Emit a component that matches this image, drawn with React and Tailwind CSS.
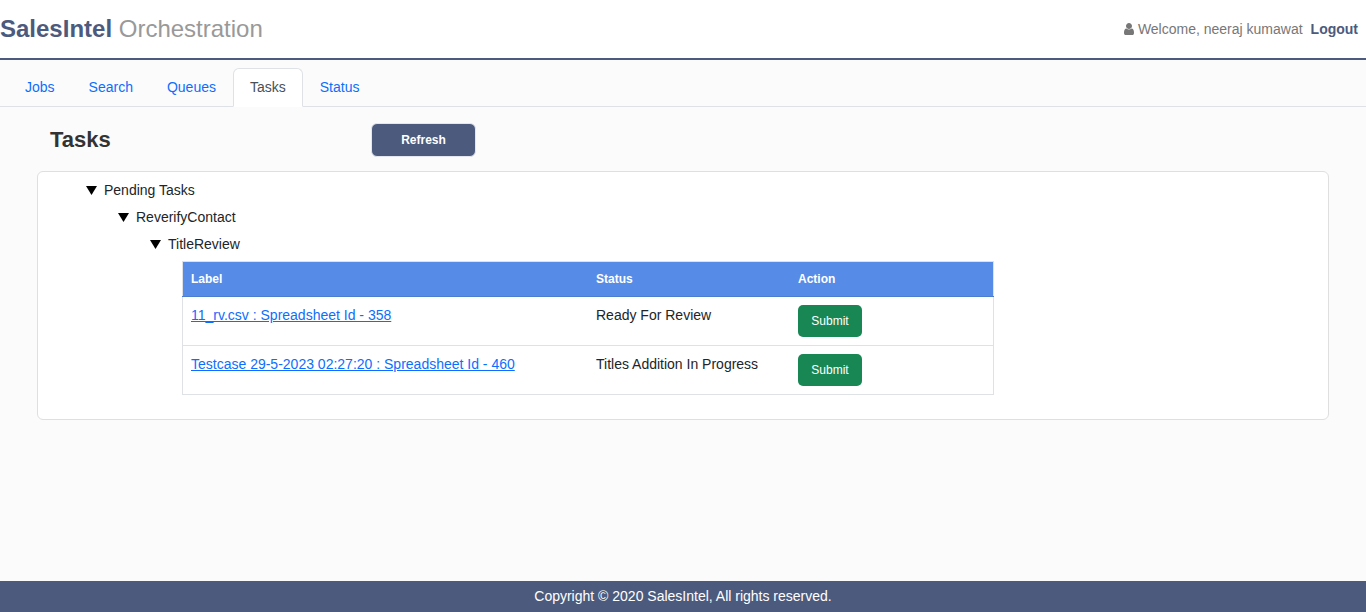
import { useState } from "react";

const tabs = ["Jobs", "Search", "Queues", "Tasks", "Status"];

const tasks = [
  { label: "11_rv.csv : Spreadsheet Id - 358", status: "Ready For Review" },
  { label: "Testcase 29-5-2023 02:27:20 : Spreadsheet Id - 460", status: "Titles Addition In Progress" },
];

function UserIcon() {
  return (
    <svg viewBox="0 0 1280 1792" className="h-[14px] w-[10px] fill-current" aria-hidden="true">
      <path d="M1280 1399q0 109-62.500 187t-150.500 78h-854q-88 0-150.500-78t-62.500-187q0-85 8.500-160.500t31.500-152 58.500-131 94-89 134.500-34.500q131 128 313 128t313-128q76 0 134.500 34.500t94 89 58.500 131 31.500 152 8.500 160.500zm-256-887q0 159-112.500 271.500t-271.500 112.500-271.500-112.500-112.500-271.500 112.500-271.500 271.500-112.500 271.500 112.500 112.500 271.500z" />
    </svg>
  );
}

function TreeNode({ label, children }) {
  const [open, setOpen] = useState(true);
  return (
    <li className="flex flex-col gap-1.5">
      <button
        type="button"
        aria-expanded={open}
        onClick={() => setOpen(!open)}
        className="flex items-center gap-1.5 self-start"
      >
        <svg viewBox="0 0 12 10" className={open ? "h-2.5 w-3 fill-black" : "h-2.5 w-3 -rotate-90 fill-black"} aria-hidden="true">
          <path d="M0 0h11L5.500 9z" />
        </svg>
        {label}
      </button>
      {open && children}
    </li>
  );
}

function TaskTable() {
  return (
    <table className="ml-8 w-full max-w-[812px] table-fixed border-collapse border border-[#dee2e6] text-left">
      <thead className="bg-[#568be7] text-xs leading-[18px] text-white">
        <tr className="border-b border-[#4d7dd0]">
          <th className="w-1/2 p-2 font-bold">Label</th>
          <th className="w-[202px] p-2 font-bold">Status</th>
          <th className="p-2 font-bold">Action</th>
        </tr>
      </thead>
      <tbody>
        {tasks.map((task) => (
          <tr key={task.label} className="border-b border-[#dee2e6] align-top">
            <td className="p-2">
              <a href="#sheet" className="text-[#0d6efd] underline">{task.label}</a>
            </td>
            <td className="p-2">{task.status}</td>
            <td className="p-2">
              <button type="button" className="block h-8 w-16 rounded-[5px] bg-[#198754] text-xs text-white">
                Submit
              </button>
            </td>
          </tr>
        ))}
      </tbody>
    </table>
  );
}

export default function App() {
  return (
    <div className="flex min-h-screen flex-col bg-[#fbfbfb] font-['Liberation_Sans',Arial,sans-serif] text-sm leading-[21px] text-[#212529]">
      <header className="flex items-center justify-between border-b-2 border-[#4c5a7d] bg-white pt-[11px] pr-2 pb-[11px]">
        <h1 className="text-2xl leading-9 text-[#999]">
          <span className="font-bold text-[#4c5a7d]">SalesIntel</span> Orchestration
        </h1>
        <div className="flex items-center gap-2 text-[#777]">
          <span className="flex items-center gap-1">
            <UserIcon />
            Welcome, neeraj kumawat
          </span>
          <a href="#logout" className="font-bold text-[#4c5a7d]">Logout</a>
        </div>
      </header>

      <nav className="flex border-b border-[#dee2e6] px-2 pt-2">
        {tabs.map((tab) => (
          <a
            key={tab}
            href={"#" + tab.toLowerCase()}
            aria-current={tab === "Tasks" ? "page" : undefined}
            className={
              tab === "Tasks"
                ? "-mb-px rounded-t-md border border-[#dee2e6] border-b-white bg-white px-4 py-2 text-[#495057]"
                : "-mb-px border border-transparent px-4 py-2 text-[#0d6efd]"
            }
          >
            {tab}
          </a>
        ))}
      </nav>

      <main className="grow px-[37px] pt-4 pb-8">
        <div className="mb-3.5 flex items-center pl-[13px]">
          <h2 className="w-[321px] text-[22px] leading-8 font-bold text-[#333]">Tasks</h2>
          <button
            type="button"
            className="h-[34px] w-[105px] rounded-md border border-[#e3e6ee] bg-[#4c5a7d] text-xs font-bold text-white"
          >
            Refresh
          </button>
        </div>

        <section className="rounded-md border border-[#dfdfdf] bg-white px-12 pt-2 pb-6">
          <ul>
            <TreeNode label="Pending Tasks">
              <ul className="pl-8">
                <TreeNode label="ReverifyContact">
                  <ul className="pl-8">
                    <TreeNode label="TitleReview">
                      <TaskTable />
                    </TreeNode>
                  </ul>
                </TreeNode>
              </ul>
            </TreeNode>
          </ul>
        </section>
      </main>

      <footer className="bg-[#4c5a7d] py-[5px] text-center text-white">
        Copyright © 2020 SalesIntel, All rights reserved.
      </footer>
    </div>
  );
}
